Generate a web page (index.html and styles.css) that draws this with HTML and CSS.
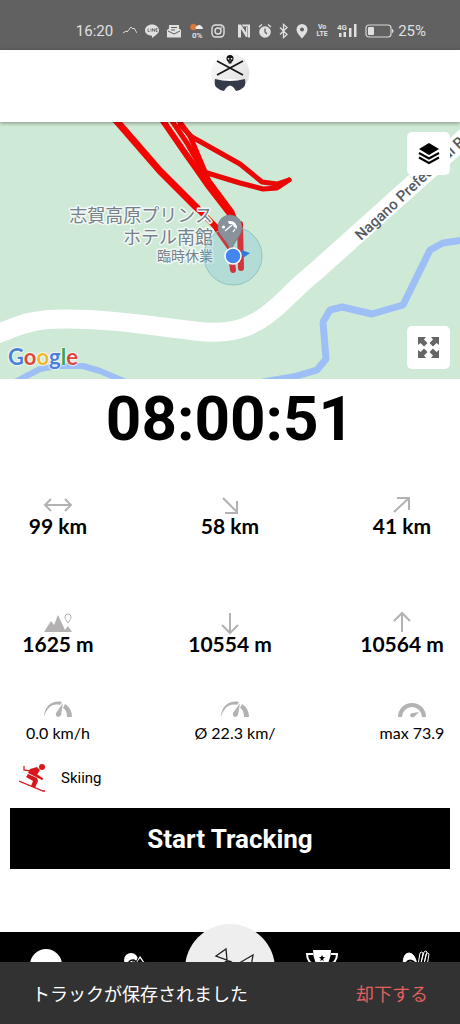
FILE: index.html
```
<!DOCTYPE html>
<html lang="ja">
<head>
<meta charset="UTF-8">
<meta name="viewport" content="width=device-width, initial-scale=1.0">
<title>Ski Tracking</title>
<link rel="stylesheet" href="styles.css">
</head>
<body>
<div class="status-bar">
    <span class="clock">16:20</span>
    <svg width="14" height="16" viewBox="0 0 14 16" fill="none" stroke="#d8d8d8"><path d="M0 10l3-2 1 1 4-5 2 2 1-1 3 5"/></svg>
    <svg width="14" height="16" viewBox="0 0 14 16"><path d="M7 1.500c4 0 7 2.500 7 5.800 0 3.200-4 5.700-7 7.700v-2.300C3 12.700 0 10.500 0 7.300 0 4 3 1.500 7 1.500z" fill="#e0e0e0"/><path d="M3 5.500v3h1.500M6 5.500v3M7.500 8.500v-3l2 3v-3M12.500 5.500H11v3h1.500M11 7h1.500" fill="none" stroke="#616161" stroke-width=".8"/></svg>
    <svg width="14" height="16" viewBox="0 0 14 16"><path d="M0 7l2-1.500V2h10v3.500L14 7v7.500H0z" fill="#e0e0e0"/><path d="M1 8l6 3 6-3M4 4.500h6M4 7h4" fill="none" stroke="#616161"/></svg>
    <svg width="14" height="18" viewBox="0 0 14 18"><circle cx="4.500" cy="5" r="3.200" fill="#d9793a" stroke="#b9612c" stroke-dasharray="1 1"/><path d="M7 7a2 2 0 0 1 1-3 3 3 0 0 1 5 1 1 1 0 0 1 0 2z" fill="#eee"/><text class="tiny" x="3" y="16">0%</text></svg>
    <svg width="14" height="16" viewBox="0 0 14 16" fill="none" stroke="#e0e0e0" stroke-width="1.400"><rect x="1" y="2" width="12" height="12" rx="3.500"/><circle cx="7" cy="8" r="3"/><circle cx="10.500" cy="4.600" r=".3"/></svg>
    <span class="system">
        <svg width="14" height="16" viewBox="0 0 14 16"><path d="M1 1.500h3l5 8V4h1.500v10H9L4 6v8.500H1zM5 1.500h8v13h-2V3.500H6z" fill="#e0e0e0"/></svg>
        <svg width="14" height="16" viewBox="0 0 14 16"><circle cx="7" cy="9" r="5.800" fill="#e0e0e0"/><path d="M1 4l3-2.500M13 4l-3-2.500" stroke="#e0e0e0" stroke-width="1.400"/><path d="M7 5.500V9l2 2" stroke="#616161" stroke-width="1.300" fill="none"/></svg>
        <svg width="10" height="16" viewBox="0 0 10 16" fill="none" stroke="#e0e0e0" stroke-width="1.300"><path d="M1 4.500l7 7-3.500 3V1.500L8 4.500l-7 7"/></svg>
        <svg width="12" height="16" viewBox="0 0 12 16"><path d="M6 1a5.500 5.500 0 0 1 5.500 5.500C11.500 10 6 15.500 6 15.500S.5 10 .5 6.500A5.500 5.500 0 0 1 6 1z" fill="#e0e0e0"/><circle cx="6" cy="6.500" r="2" fill="#616161"/></svg>
        <span class="volte">Vo<br>LTE</span>
    </span>
    <svg width="20" height="16" viewBox="0 0 20 16"><text class="tiny" x="0" y="7">4G</text><path d="M2 10h2.500v4H2zM6.500 9H9v5H6.500zM12 5h2.500v9H12zM17 1h2.500v13H17z" fill="#e0e0e0"/></svg>
    <svg width="29" height="16" viewBox="0 0 29 16"><rect x="1" y="2" width="25" height="12" rx="3" fill="none" stroke="#d8d8d8" stroke-width="1.200"/><rect x="3" y="4" width="6" height="8" rx="1" fill="#e0e0e0"/><path d="M27 6c2 0 2 4 0 4z" fill="#d8d8d8"/></svg>
    <span class="percent">25%</span>
</div>

<header class="app-header">
    <svg width="40" height="40" viewBox="0 0 40 40" role="img" aria-label="Logo">
        <defs>
            <linearGradient id="disc" x1="0" x2="1" y2="1"><stop offset="0" stop-color="#fff"/><stop offset="1" stop-color="#dedede"/></linearGradient>
        </defs>
        <path d="M20 0a20 20 0 0 1 16 31q-4-5-16-5t-16 4A20 20 0 0 1 20 0z" fill="url(#disc)"/>
        <path d="M7 8l26 14M33 8L7 22" stroke="#181818" stroke-width="1.800"/>
        <circle cx="20" cy="5.500" r="3.500" fill="#111"/><path d="M18.500 7.500h3v3h-3z" fill="#111"/>
        <path d="M17.800 5h1.500v1.500h-1.500zM20.800 5h1.500v1.500h-1.500zM19.600 7.300h.8v1h-.8z" fill="#eee"/>
        <path d="M5 26q15 4 30 0 1 5-1 8-3 3-8 4l-2-3q-4-5-8 0l-2 3q-5-1-8-4-2-3-1-8z" fill="#343a48"/>
    </svg>
</header>

<section class="map">
    <svg class="map-canvas" viewBox="0 0 460 257" preserveAspectRatio="xMidYMid slice">
        <rect width="460" height="257" fill="#cee9d6"/>
        <!-- rivers -->
        <g fill="none" stroke="#9dbff5" stroke-width="7" stroke-linejoin="bevel">
            <path d="M464 118l-21 3-13 7-27 55-31 9-30-7-12 3-7 12 3 37-9 11-24 7-30 5"/>
            <path d="M15 260l25-13 17-3h26l17 5 26 11" stroke-width="6"/>
        </g>
        <!-- road -->
        <path d="M-5 213C25 200 38 197 65 197c50 0 85 7 130 12 32 4 54-1 77-20 15-12 24-24 43-39L470 11" fill="none" stroke="#fff" stroke-width="19"/>
        <text class="road-name" transform="translate(361 119) rotate(-43)">Nagano Prefectural Road</text>
        <!-- recorded runs -->
        <g fill="none" stroke="#f40400" stroke-linejoin="round" stroke-linecap="round">
            <path d="M114-4l46 53 37 37" stroke-width="7"/>
            <path d="M197 86l18 18 14 20" stroke-width="6"/>
            <path d="M161-4l22 32 12 17 14 20 24 31" stroke-width="6"/>
            <path d="M170-4l17 25 13 23 10 18 23 33" stroke-width="5"/>
            <path d="M177-4l13 18 13 31 6 14 23 31 5 14" stroke-width="5"/>
            <path d="M180 3l12 12 48 27 22 18 15 2 12-4" stroke="#e80805" stroke-width="5"/>
            <path d="M204 50l36 11 23 6 14-1 12-8" stroke="#e80805" stroke-width="5"/>
            <path d="M229 116l4 32M240 102l1 44" stroke-width="6"/>
        </g>
        <g class="place">
            <text x="213" y="100">志賀高原プリンス</text>
            <text x="213" y="122">ホテル南館</text>
            <text class="place-note" x="213" y="139">臨時休業</text>
        </g>
        <circle cx="233" cy="134" r="29" fill="#74bcd8" fill-opacity=".28" stroke="#8bc5c5"/>
        <path d="M230 93a12 12 0 0 1 12 12c0 10-9 13-11 26-2-13-13-16-13-26a12 12 0 0 1 12-12z" fill="#87929b" stroke="#75808a" stroke-width=".7"/>
        <circle cx="223.500" cy="105" r="1.600" fill="#fff"/>
        <path d="M228 99q9-1 9 8l-3-2-2-3-3 0z" fill="#fff"/>
        <path d="M232 103l-7 6M235 107l-2 3" stroke="#fff" stroke-width="1.300"/>
        <path d="M241 128l9 3-7 5z" fill="#3278dc"/>
        <circle cx="233" cy="134" r="8" fill="#4386ef" stroke="#fff" stroke-width="1.500"/>
    </svg>
    <div class="google" aria-label="Google"><span class="g-blue">G</span><span class="g-red">o</span><span class="g-yellow">o</span><span class="g-blue">g</span><span class="g-green">l</span><span class="g-red">e</span></div>
    <button class="map-button layers" type="button" aria-label="Layers">
        <svg width="23" height="23" viewBox="0 0 23 23"><path d="M12 1l10 6-10 6L2 7z"/><path d="M2 11l10 5.500L22 11M2 15.500L12 21l10-5.500" fill="none" stroke="#000" stroke-width="2"/></svg>
    </button>
    <button class="map-button expand" type="button" aria-label="Fullscreen">
        <svg width="23" height="23" viewBox="0 0 23 23" fill="#666"><path id="corner" d="M1 1h8L7 3.500l3.500 3.500-3.500 3.500L3.500 7 1 9z"/><use href="#corner" transform="rotate(90 11.500 11.500)"/><use href="#corner" transform="rotate(180 11.500 11.500)"/><use href="#corner" transform="rotate(270 11.500 11.500)"/></svg>
    </button>
</section>

<main>
    <div class="timer">08:00:51</div>

    <div class="stats">
        <div class="stat">
            <svg width="30" height="24" viewBox="0 0 30 24"><path d="M2 12h26M8 6l-6 6 6 6M22 6l6 6-6 6"/></svg>
            <span>99 km</span>
        </div>
        <div class="stat">
            <svg width="30" height="24" viewBox="0 0 30 24"><path d="M8 5l14 14M22 8v12H10"/></svg>
            <span>58 km</span>
        </div>
        <div class="stat">
            <svg width="30" height="24" viewBox="0 0 30 24"><path d="M7 19L22 5M10 5h12v12"/></svg>
            <span>41 km</span>
        </div>
    </div>

    <div class="stats">
        <div class="stat">
            <svg width="30" height="24" viewBox="0 0 30 24"><path class="solid" d="M1 21L8 10l3 4 4-10 7 15 3-4 4 6z"/><path d="M25 12c-2-3-3-4-3-6a3 3 0 0 1 6 0c0 2-1 3-3 6z" stroke-width="1"/></svg>
            <span>1625 m</span>
        </div>
        <div class="stat">
            <svg width="30" height="24" viewBox="0 0 30 24"><path d="M15 2v20M7 14l8 8 8-8"/></svg>
            <span>10554 m</span>
        </div>
        <div class="stat">
            <svg width="30" height="24" viewBox="0 0 30 24"><path d="M15 21V2M7 10l8-8 8 8"/></svg>
            <span>10564 m</span>
        </div>
    </div>

    <div class="stats speeds">
        <div class="stat">
            <svg width="30" height="24" viewBox="0 0 30 24"><path id="dial" class="solid" d="M1 20C1 9 10 3 19 5l-2 3C10 6 4 10 1 20zM20 6l-2 12q-1 2-3 2-3-1-2-4zM22 7q7 4 7 13h-5q0-7-4-9z"/></svg>
            <span>0.0 km/h</span>
        </div>
        <div class="stat">
            <svg width="30" height="24" viewBox="0 0 30 24"><use href="#dial"/></svg>
            <span>Ø 22.3 km/</span>
        </div>
        <div class="stat">
            <svg width="30" height="24" viewBox="0 0 30 24"><path d="M3 20a12 12 0 0 1 24 0" stroke-width="4"/><path class="solid" d="M22 15l-5 5q-3 1-4-1 0-3 3-3z"/></svg>
            <span>max 73.9</span>
        </div>
    </div>

    <div class="activity">
        <svg width="28" height="30" viewBox="0 0 28 30"><circle cx="23" cy="4" r="3" fill="#d8171c"/><path d="M11 6l7-2 3 3-3 5 6 4-1 1-10-5-4-2zM9 11l9 4 1 3-3 7-4-2 2-5-7-4z" fill="#d8171c"/><path d="M5 3v4l7 1 12 8M0 18l24 10h2" fill="none" stroke="#d8171c" stroke-width="1.300"/></svg>
        <span>Skiing</span>
    </div>

    <button class="start" type="button">Start Tracking</button>
</main>

<nav class="tabs">
    <a href="#profile" aria-label="Profile"><span class="avatar"></span></a>
    <a href="#resorts" aria-label="Resorts">
        <svg width="32" height="28" viewBox="0 0 32 28"><circle cx="9" cy="13" r="7" fill="#fff"/><path d="M6 19q0-6 5-6 3 0 3 4M9 18q0-3 3-3" fill="none" stroke="#000" stroke-width="1.300"/><path d="M11 20l7-12 8 12z" fill="#fff" stroke="#000"/><path d="M15 17l3-4 3 4" fill="none" stroke="#000" stroke-width="2"/></svg>
    </a>
    <a class="record" href="#record" aria-label="Record">
        <svg width="60" height="50" viewBox="0 0 60 50" fill="none" stroke="#222" stroke-width="1.300"><path d="M16 10l10-7 1 11zM41 16l12-7-2 12zM24 17q4-4 9 0"/><circle cx="28" cy="25" r="9"/></svg>
    </a>
    <a href="#ranking" aria-label="Ranking">
        <svg width="32" height="32" viewBox="0 0 32 32"><path d="M7 3h18q0 14-9 18Q7 17 7 3z" fill="#fff"/><path d="M7 7H1q0 9 9 11M25 7h6q0 9-9 11" fill="none" stroke="#fff" stroke-width="2"/><path d="M16 8l1 2h2l-2 2 1 2-2-1-2 1 1-2-2-2h2z"/></svg>
    </a>
    <a href="#friends" aria-label="Friends">
        <svg width="32" height="32" viewBox="0 0 32 32" fill="none" stroke="#fff"><path d="M5 18Q5 6 11 6t8 12" fill="#fff"/><path d="M8 16q4-5 9 0" stroke="#000" stroke-width="2"/><path d="M20 18l2-12q1-2 3 0l-2 10 3-11q2-2 3 0l-3 12 2-10q2-2 3 0l-2 12"/></svg>
    </a>
</nav>

<div class="snackbar" role="status">
    <span>トラックが保存されました</span>
    <button type="button">却下する</button>
</div>
</body>
</html>
```
FILE: styles.css
```
* {
    box-sizing: border-box;
}
body {
    margin: 0;
    min-height: 100vh;
    display: flex;
    flex-direction: column;
    background: #fff;
    color: #000;
    font-family: Roboto, "Noto Sans CJK JP", sans-serif;
}
button {
    border: none;
    cursor: pointer;
    font-family: inherit;
}
svg {
    display: block;
    flex-shrink: 0;
}

/* phone status bar */
.status-bar {
    height: 50px;
    padding: 12px 34px 0 0;
    display: flex;
    align-items: center;
    justify-content: flex-end;
    gap: 8px;
    background: #616161;
    color: #e0e0e0;
    font-size: 15px;
}
.clock {
    margin-right: 2px;
}
.system {
    margin-left: 4px;
    display: flex;
    align-items: center;
    gap: 7px;
}
.tiny {
    fill: #e0e0e0;
    font-size: 8px;
    font-weight: bold;
}
.volte {
    width: 14px;
    font-size: 7px;
    line-height: 7px;
    font-weight: bold;
    text-align: center;
}
.percent {
    margin-left: -4px;
}

.app-header {
    height: 72px;
    padding-top: 3px;
    display: flex;
    justify-content: center;
    position: relative;
    z-index: 1;
    background: #fff;
    box-shadow: 0 1px 4px rgba(0, 0, 0, 0.4);
}

/* map */
.map {
    height: 257px;
    position: relative;
    overflow: hidden;
}
.map-canvas {
    width: 100%;
    height: 100%;
}
.road-name {
    fill: #555b60;
    font-size: 15px;
    font-weight: 500;
}
.place {
    fill: #76808a;
    stroke: #f0f8f3;
    stroke-width: 3px;
    stroke-linejoin: round;
    paint-order: stroke;
    font-family: "Noto Sans CJK JP", sans-serif;
    font-size: 18px;
    text-anchor: end;
}
.place-note {
    font-size: 14px;
}
.google {
    position: absolute;
    left: 8px;
    bottom: 8px;
    font-family: Lato, sans-serif;
    font-size: 22px;
    line-height: 28px;
    font-weight: bold;
    text-shadow: 0 0 2px #fff, 0 0 2px #fff, 0 0 2px #fff;
}
.g-blue {
    color: #4a80d8;
}
.g-red {
    color: #d9473f;
}
.g-yellow {
    color: #edb92e;
}
.g-green {
    color: #3da45a;
}
.map-button {
    position: absolute;
    right: 10px;
    width: 43px;
    height: 43px;
    padding: 0;
    display: flex;
    align-items: center;
    justify-content: center;
    background: #fff;
    border-radius: 5px;
}
.layers {
    top: 10px;
}
.expand {
    bottom: 10px;
}

/* tracking data */
.timer {
    padding-top: 3px;
    margin-bottom: 37px;
    font-size: 62px;
    line-height: 74px;
    font-weight: bold;
    text-align: center;
}
.stats {
    height: 118px;
    padding: 0 10px;
    display: flex;
    justify-content: space-between;
    font-family: Lato, sans-serif;
    font-size: 21px;
    line-height: 18px;
    font-weight: bold;
}
.stat {
    width: 96px;
    display: flex;
    flex-direction: column;
    align-items: center;
    white-space: nowrap;
}
.stat svg {
    fill: none;
    stroke: #b3b1b1;
    stroke-width: 2px;
}
.stat .solid {
    fill: #b3b1b1;
    stroke: none;
}
.speeds {
    height: 50px;
    padding-right: 0;
    margin-top: -32px;
    font-size: 16px;
    line-height: 24px;
    font-weight: normal;
}
.activity {
    height: 61px;
    padding-left: 19px;
    display: flex;
    align-items: center;
    gap: 14px;
    font-size: 15px;
}
.start {
    display: block;
    width: calc(100% - 20px);
    height: 61px;
    margin: 0 10px 63px;
    background: #000;
    color: #fff;
    font-size: 26px;
    font-weight: bold;
}

/* bottom navigation */
.tabs {
    height: 92px;
    margin-top: auto;
    display: grid;
    grid-template-columns: repeat(5, 1fr);
    justify-items: center;
    background: #000;
}
.tabs a {
    padding-top: 15px;
}
.avatar {
    display: block;
    width: 32px;
    height: 32px;
    margin-top: 2px;
    border-radius: 50%;
    background: #fff;
}
.tabs .record {
    width: 90px;
    height: 90px;
    margin-top: -8px;
    padding: 22px 15px;
    border-radius: 50%;
    background: #eee;
}
.snackbar {
    position: fixed;
    left: 0;
    right: 0;
    bottom: 0;
    height: 62px;
    padding: 0 32px;
    display: flex;
    align-items: center;
    justify-content: space-between;
    background: #323232;
    color: #fff;
    font-size: 18px;
}
.snackbar button {
    padding: 0;
    background: none;
    color: #e2605e;
    font-size: 18px;
}
```
